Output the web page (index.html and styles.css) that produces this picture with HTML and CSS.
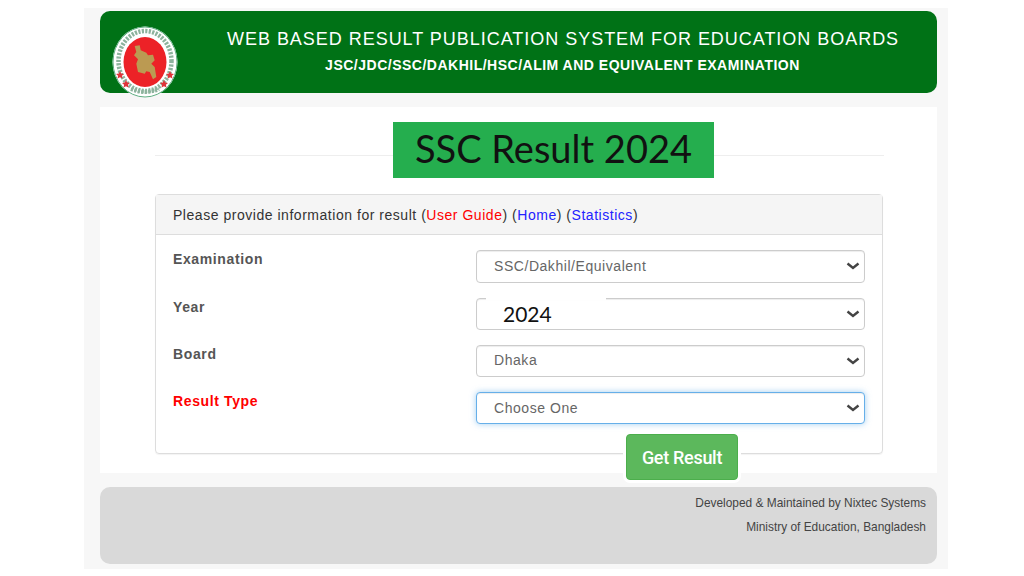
FILE: index.html
```html
<!DOCTYPE html>
<html lang="en">
<head>
<meta charset="UTF-8">
<meta name="viewport" content="width=device-width, initial-scale=1.0">
<title>SSC Result 2024</title>
<link rel="stylesheet" href="styles.css">
</head>
<body>
<div class="wrapper">
  <header class="banner">
    <svg class="logo" width="68" height="74" viewBox="0 0 68 74">
      <ellipse cx="34" cy="37" rx="32.500" ry="35.500" fill="#fff"/>
      <ellipse cx="34" cy="37" rx="32" ry="35" fill="none" stroke="#5fae82" stroke-width="1"/>
      <ellipse cx="34" cy="36" rx="26.500" ry="30" fill="none" stroke="#8db39d" stroke-width="4.500" stroke-dasharray="2.200 1.300"/>
      <ellipse cx="34" cy="37" rx="21.500" ry="25" fill="#ec2227"/>
      <path d="M23.700 21l5-.7 1 5 5.600 2.400 1.700 2.600 5-.6 1.700 5.600-3.400 3.400 3.400 3.300 1.600 10-3.300 2.300-3.300-7.300-3.400-.7-1.600 2.400-6.700-1.700-1.700-8.300 1.700-4.400-4-4 2.300-3.300z" fill="#bb9a52"/>
      <ellipse cx="34" cy="37" rx="25" ry="28" fill="none"/>
      <g fill="#e0343a">
        <path d="M9 46l1.200 2.600 2.800.3-2.100 1.900.6 2.800-2.500-1.400-2.500 1.400.6-2.800-2.100-1.900 2.800-.3z"/>
        <path d="M59 46l1.200 2.600 2.800.3-2.100 1.900.6 2.800-2.500-1.400-2.500 1.400.6-2.800-2.100-1.900 2.800-.3z"/>
        <path d="M15 55l1.200 2.600 2.800.3-2.100 1.900.6 2.800-2.500-1.400-2.500 1.400.6-2.800-2.100-1.900 2.800-.3z"/>
        <path d="M53 55l1.200 2.600 2.800.3-2.100 1.900.6 2.800-2.500-1.400-2.500 1.400.6-2.800-2.100-1.900 2.800-.3z"/>
      </g>
      <path d="M20 64q14 6 28 0" fill="none" stroke="#8db39d" stroke-width="4" stroke-dasharray="2.200 1.300"/>
    </svg>
    <div class="banner-text">
      <h1>WEB BASED RESULT PUBLICATION SYSTEM FOR EDUCATION BOARDS</h1>
      <h2>JSC/JDC/SSC/DAKHIL/HSC/ALIM AND EQUIVALENT EXAMINATION</h2>
    </div>
  </header>

  <main class="content">
    <div class="title-row">
      <div class="title">SSC Result 2024</div>
    </div>

    <form class="result-panel">
      <div class="panel-heading">
        Please provide information for result
        (<a class="link-red" href="#">User Guide</a>)
        (<a class="link-blue" href="#">Home</a>)
        (<a class="link-blue" href="#">Statistics</a>)
      </div>
      <div class="panel-body">
        <div class="form-row first-row">
          <label for="exam">Examination</label>
          <div class="select-box">
            <select id="exam"><option>SSC/Dakhil/Equivalent</option></select>
            <svg class="chevron" width="14" height="8" viewBox="0 0 14 8"><path d="M1.500 1.500L7 6l5.500-4.500" fill="none" stroke="#444" stroke-width="2.400"/></svg>
          </div>
        </div>
        <div class="form-row">
          <label for="year">Year</label>
          <div class="select-box year-box">
            <select id="year"><option>2024</option></select>
            <svg class="chevron" width="14" height="8" viewBox="0 0 14 8"><path d="M1.500 1.500L7 6l5.500-4.500" fill="none" stroke="#444" stroke-width="2.400"/></svg>
          </div>
        </div>
        <div class="form-row">
          <label for="board">Board</label>
          <div class="select-box">
            <select id="board"><option>Dhaka</option></select>
            <svg class="chevron" width="14" height="8" viewBox="0 0 14 8"><path d="M1.500 1.500L7 6l5.500-4.500" fill="none" stroke="#444" stroke-width="2.400"/></svg>
          </div>
        </div>
        <div class="form-row">
          <label class="label-red" for="type">Result Type</label>
          <div class="select-box focus-box">
            <select id="type"><option>Choose One</option></select>
            <svg class="chevron" width="14" height="8" viewBox="0 0 14 8"><path d="M1.500 1.500L7 6l5.500-4.500" fill="none" stroke="#444" stroke-width="2.400"/></svg>
          </div>
        </div>
      </div>
    </form>
    <div class="submit-row">
      <button class="btn-result" type="button">Get Result</button>
    </div>
  </main>

  <footer class="page-footer">
    <p>Developed &amp; Maintained by Nixtec Systems</p>
    <p>Ministry of Education, Bangladesh</p>
  </footer>
</div>
</body>
</html>
```

FILE: styles.css
```css
body {
  margin: 0;
  padding: 0;
  background-color: #fff;
  font-family: "Liberation Sans", Arial, sans-serif;
  color: #333;
}
.wrapper {
  width: 864px;
  height: 561px;
  box-sizing: border-box;
  margin: 8px 0 0 84px;
  padding: 3px 11px 0 16px;
  background-color: #f7f7f7;
}
.banner {
  position: relative;
  height: 82px;
  border-radius: 10px;
  background-color: #007216;
  color: #fff;
}
.logo {
  position: absolute;
  left: 11px;
  top: 14px;
}
.banner-text {
  padding: 18px 39px 0 127px;
  text-align: center;
}
.banner-text h1 {
  margin: 0;
  font-size: 18px;
  line-height: 20px;
  font-weight: normal;
  letter-spacing: 0.97px;
  white-space: nowrap;
}
.banner-text h2 {
  margin: 9px 0 0;
  font-size: 14px;
  line-height: 14px;
  font-weight: bold;
  letter-spacing: 0.5px;
  white-space: nowrap;
}
.content {
  height: 366px;
  box-sizing: border-box;
  margin-top: 14px;
  padding: 15px 53px 0 55px;
  background-color: #fff;
}
.title-row {
  height: 56px;
  padding-left: 238px;
  background: linear-gradient(#eee, #eee) 0 33px / 100% 1px no-repeat;
}
.title {
  display: inline-block;
  width: 321px;
  height: 56px;
  background-color: #25ae4e;
  color: #111;
  text-align: center;
  font-family: Lato, sans-serif;
  font-size: 38px;
  line-height: 52px;
}
.result-panel {
  width: 728px;
  height: 260px;
  box-sizing: border-box;
  margin-top: 16px;
  border: 1px solid #ddd;
  border-radius: 4px;
  box-shadow: 0 1px 1px rgba(0, 0, 0, 0.05);
}
.panel-heading {
  height: 40px;
  box-sizing: border-box;
  padding: 12px 17px 0;
  border-bottom: 1px solid #ddd;
  background-color: #f5f5f5;
  font-size: 14px;
  line-height: 16px;
  letter-spacing: 0.53px;
}
.link-red {
  color: #f00;
  text-decoration: none;
}
.link-blue {
  color: #22f;
  text-decoration: none;
}
.panel-body {
  display: flex;
  flex-direction: column;
  gap: 15px;
  padding: 15px 17px 0;
}
.form-row {
  display: grid;
  grid-template-columns: 303px 1fr;
}
.form-row label {
  padding-top: 1px;
  font-size: 14px;
  line-height: 16px;
  font-weight: bold;
  letter-spacing: 0.62px;
  color: #555;
}
.form-row .label-red {
  color: #f00;
}
.select-box {
  position: relative;
}
.select-box select {
  display: block;
  width: 100%;
  height: 32px;
  box-sizing: border-box;
  padding: 0 30px 2px 17px;
  border: 1px solid #ccc;
  border-radius: 4px;
  background-color: #fff;
  box-shadow: inset 0 1px 1px rgba(0, 0, 0, 0.075);
  appearance: none;
  font-family: "Liberation Sans", Arial, sans-serif;
  font-size: 14px;
  letter-spacing: 0.55px;
  color: #666;
  outline: none;
}
.first-row .select-box select {
  height: 33px;
}
.year-box select {
  padding-left: 26px;
  font-family: Lato, sans-serif;
  font-size: 21px;
  letter-spacing: 0;
  color: #111;
}
.year-box::before {
  content: "";
  position: absolute;
  left: 10px;
  top: 0;
  width: 120px;
  height: 2px;
  background-color: #fff;
}
.focus-box select {
  padding-bottom: 0;
  border-color: #66afe9;
  box-shadow: inset 0 1px 1px rgba(0, 0, 0, 0.075), 0 0 6px rgba(102, 175, 233, 0.6);
}
.chevron {
  position: absolute;
  right: 5px;
  top: 12px;
  pointer-events: none;
}
.submit-row {
  margin-top: -20px;
  padding-left: 471px;
}
.btn-result {
  position: relative;
  display: block;
  width: 112px;
  height: 46px;
  padding: 0;
  border: 1px solid #4cae4c;
  border-radius: 4px;
  background-color: #5cb85c;
  box-shadow: 0 0 0 3px #fff;
  color: #fff;
  font-family: Roboto, sans-serif;
  font-size: 18px;
  font-weight: 500;
  letter-spacing: -0.3px;
  cursor: pointer;
}
.page-footer {
  height: 77px;
  box-sizing: border-box;
  margin-top: 14px;
  padding: 9px 11px 0 0;
  border-radius: 10px;
  background-color: #d9d9d9;
  text-align: right;
  font-size: 11.9px;
  line-height: 14px;
  color: #444;
}
.page-footer p {
  margin: 0 0 10px;
}
```
